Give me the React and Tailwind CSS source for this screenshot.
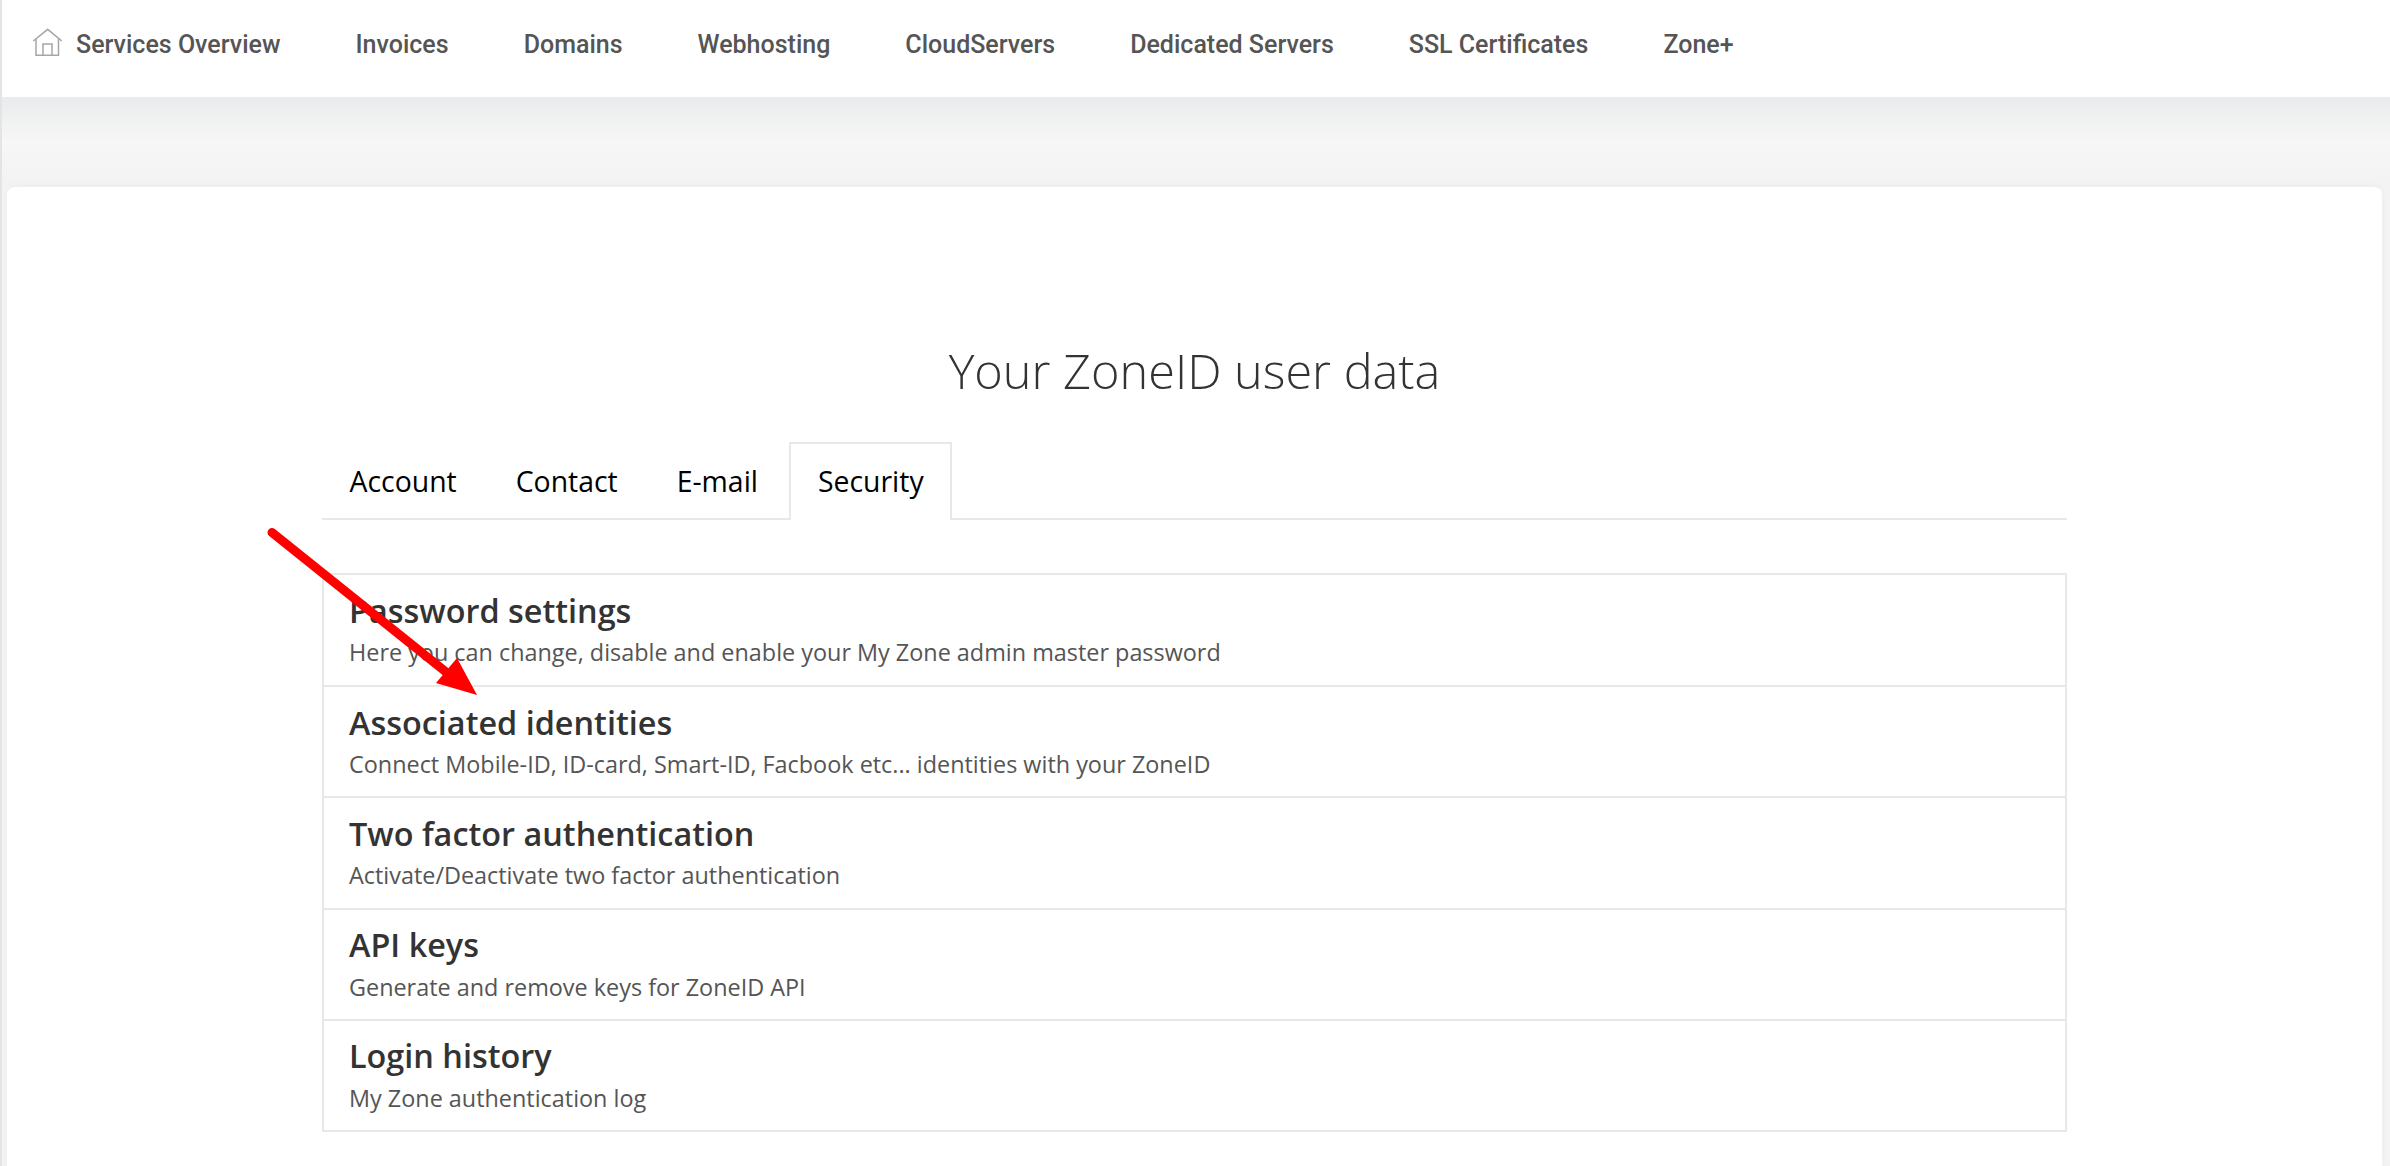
const nav = ["Services Overview", "Invoices", "Domains", "Webhosting", "CloudServers", "Dedicated Servers", "SSL Certificates", "Zone+"];
const tabs = ["Account", "Contact", "E-mail"];
const rows = [
  ["Password settings", "Here you can change, disable and enable your My Zone admin master password"],
  ["Associated identities", "Connect Mobile-ID, ID-card, Smart-ID, Facbook etc... identities with your ZoneID"],
  ["Two factor authentication", "Activate/Deactivate two factor authentication"],
  ["API keys", "Generate and remove keys for ZoneID API"],
  ["Login history", "My Zone authentication log"],
];

function HomeIcon() {
  return (
    <svg width="30" height="30" viewBox="0 0 30 30" fill="none" stroke="#a6a6a6" strokeWidth="1.5" className="mb-[3px] shrink-0">
      <path d="M1.3 13 L15.7 1.3 L29.7 13" />
      <path d="M4 11 V27.2 H26.5 V11" />
      <path d="M11 27.2 V16 H20 V27.2" />
    </svg>
  );
}

export default function App() {
  return (
    <div className="relative h-[1166px] overflow-hidden border-l-2 border-[#e4e4e4] bg-[#f3f3f3] font-['Open_Sans',sans-serif]">
      <header className="flex h-[97px] items-center bg-white pb-[8px] pl-[30px] font-['Roboto',sans-serif] text-[25px] font-medium text-[#555555]">
        <HomeIcon />
        {nav.map((label, i) => (
          <span key={label} className={i === 0 ? "ml-[14px]" : "ml-[75px]"}>{label}</span>
        ))}
      </header>
      <div className="h-[90px] bg-gradient-to-b from-[#e9ebec] via-[#f7f7f7] to-[#f2f2f2]" />
      <main className="mr-[8px] ml-[5px] h-[979px] rounded-t-[8px] bg-white pt-[151px] shadow-[0_0_10px_rgba(0,0,0,0.03)]">
        <h1 className="text-center text-[48.6px] leading-[64px] font-light text-[#333333]">Your ZoneID user data</h1>
        <div className="mx-[315px] mt-[40px]">
          <div className="flex h-[78px] border-b-2 border-[#e8e8e8] pl-[27.5px] text-[28.4px] text-black">
            {tabs.map((t, i) => (
              <span key={t} className={i === 2 ? "mt-[2px] mr-[1.5px] pt-[2px] pr-[30px] pl-[29px] leading-[71px] first:pl-0" : "mt-[2px] pt-[2px] pr-[30px] pl-[29px] leading-[71px] first:pl-0"}>{t}</span>
            ))}
            <span className="h-[78px] border-2 border-b-0 border-[#e8e8e8] bg-white px-[26.5px] pt-[2px] leading-[71px]">Security</span>
          </div>
          <ul className="mt-[53px] border-2 border-[#e8e8e8]">
            {rows.map(([t, d], i) => (
              <li key={t} className={i > 0 ? "h-[111.3px] border-t-2 border-[#e8e8e8] pt-[12.5px] pr-[26px] pl-[25px]" : "h-[110px] pt-[12.5px] pr-[26px] pl-[25px]"}>
                <div className="mb-[3.5px] text-[32.4px] leading-[44px] font-semibold text-[#333333]">{t}</div>
                <div className="text-[23.4px] leading-[34px] text-[#555555]">{d}</div>
              </li>
            ))}
          </ul>
        </div>
      </main>
      <svg className="absolute top-0 left-[-2px]" width="2390" height="1166" fill="none">
        <path d="M272 532.5 L446 672" stroke="#ff0000" strokeWidth="9" strokeLinecap="round" />
        <path d="M477 695 L436 683 L457 658 Z" fill="#ff0000" />
      </svg>
    </div>
  );
}
